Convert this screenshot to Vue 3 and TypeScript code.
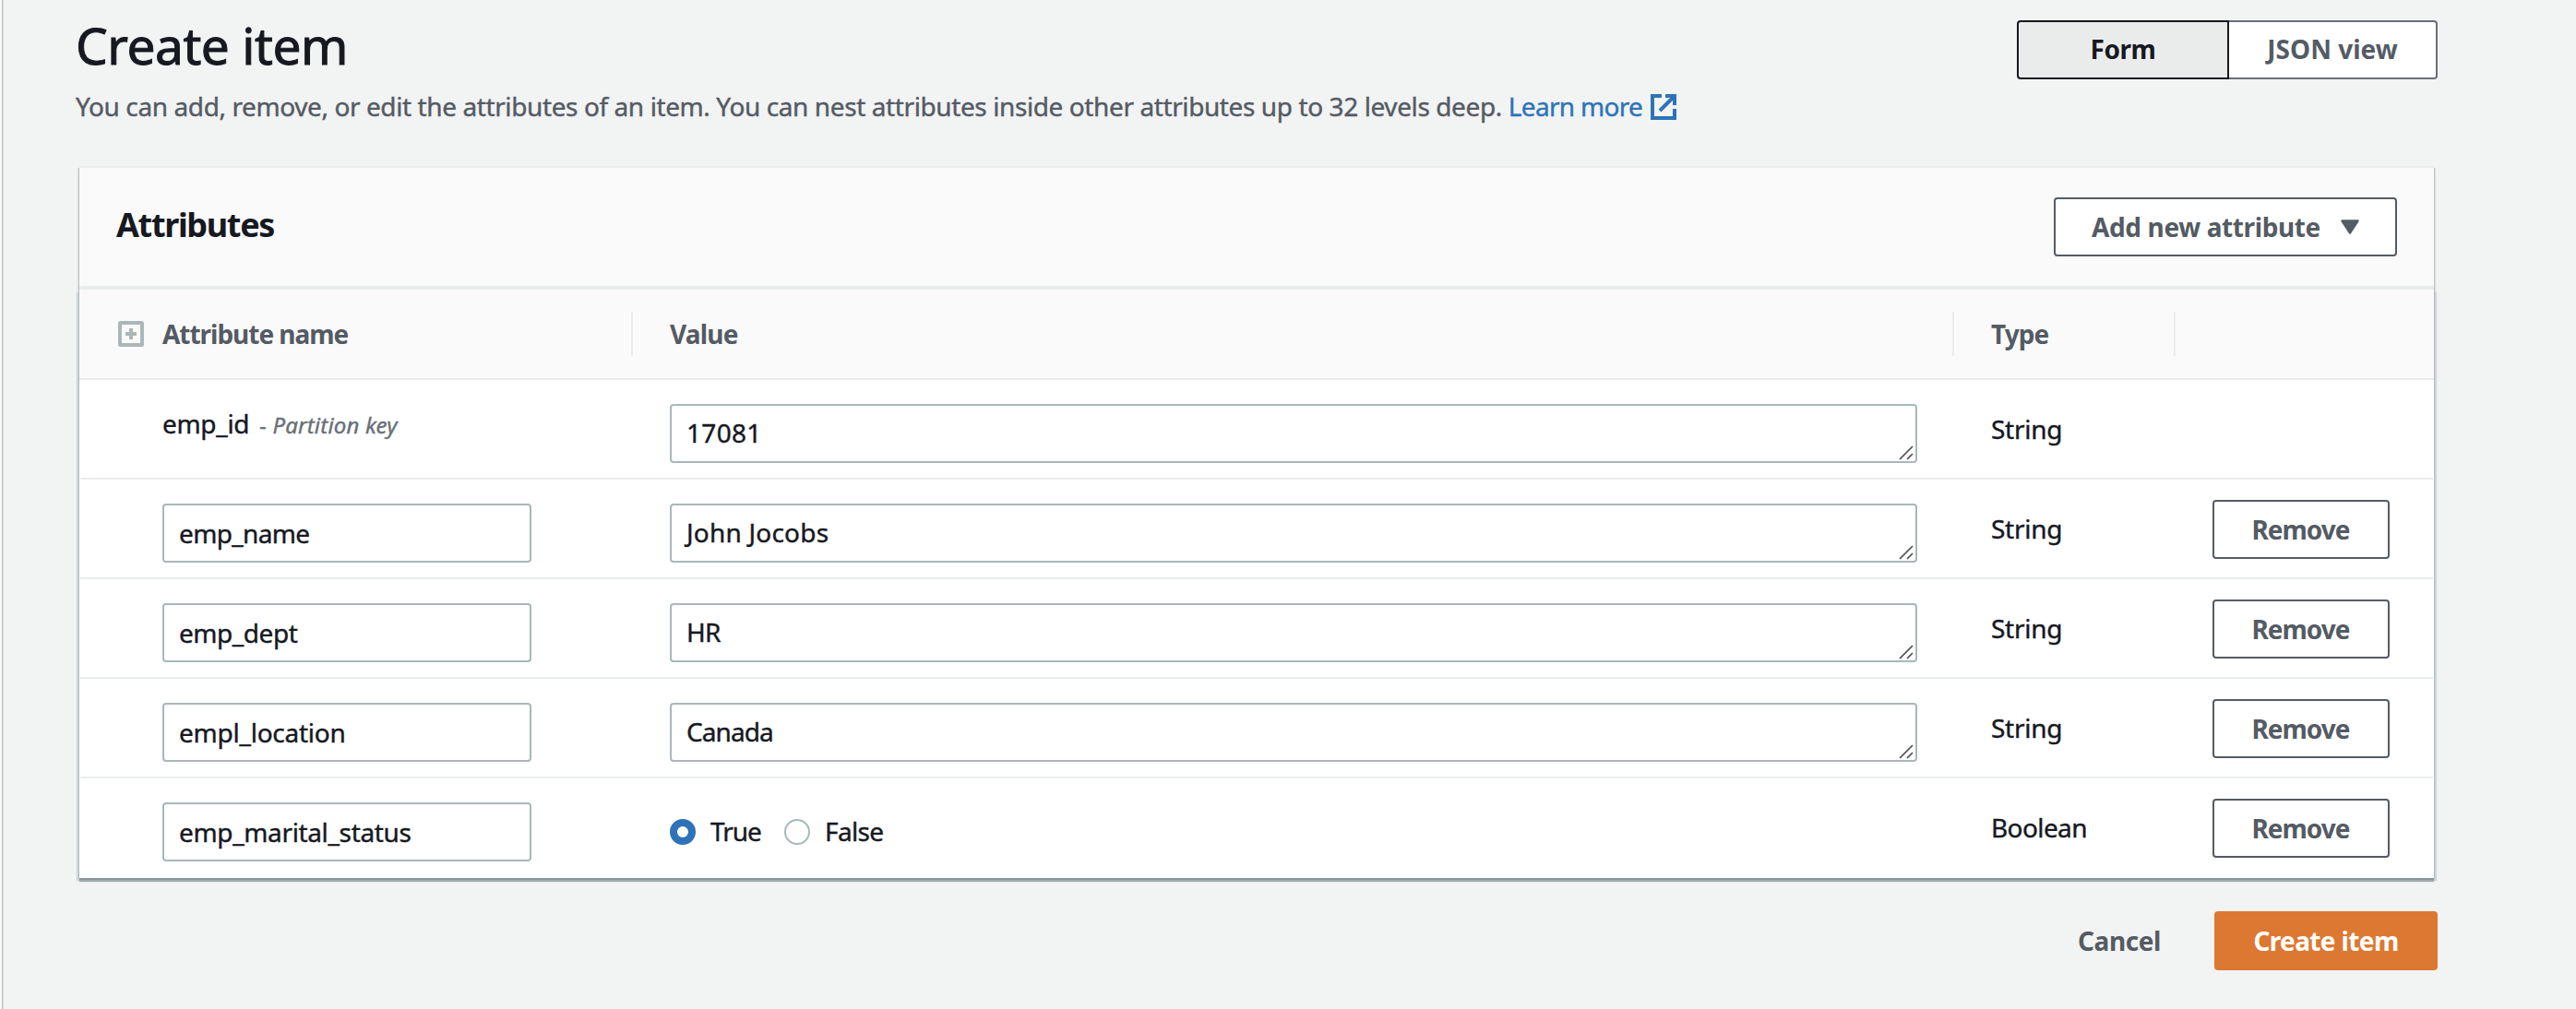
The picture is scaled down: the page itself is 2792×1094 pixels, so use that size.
<script setup lang="ts">
import { ref } from 'vue'

interface Attribute {
  name: string
  value: string
  type: 'String' | 'Boolean'
  tracking: number
  valueTracking: number
  partitionKey?: boolean
}

const attributes = ref<Attribute[]>([
  { name: 'emp_id', value: '17081', type: 'String', tracking: -0.3, valueTracking: 0.3, partitionKey: true },
  { name: 'emp_name', value: 'John Jocobs', type: 'String', tracking: -0.65, valueTracking: 0.2 },
  { name: 'emp_dept', value: 'HR', type: 'String', tracking: -0.45, valueTracking: -0.8 },
  { name: 'empl_location', value: 'Canada', type: 'String', tracking: -0.24, valueTracking: -0.93 },
  { name: 'emp_marital_status', value: 'true', type: 'Boolean', tracking: -0.35, valueTracking: 0 },
])

const view = ref<'form' | 'json'>('form')

function remove(index: number) {
  attributes.value.splice(index, 1)
}
</script>

<template>
  <main class="page">
    <header class="page-head">
      <div>
        <h1>Create item</h1>
        <p class="desc">
          <span>You can add, remove, or edit the attributes of an item. You can nest attributes inside other attributes up to 32 levels deep.</span>
          <a class="learn">Learn more</a>
          <svg class="ext" width="28" height="28" viewBox="0 0 28 28" fill="none" stroke="currentColor" stroke-width="4">
            <path d="M12 2H2V26H26V16" />
            <path d="M16 2H26V12M25 3L10 18" />
          </svg>
        </p>
      </div>
      <div class="toggle">
        <button class="seg form" :class="{ on: view === 'form' }" @click="view = 'form'"><span>Form</span></button>
        <button class="seg json" :class="{ on: view === 'json' }" @click="view = 'json'"><span>JSON view</span></button>
      </div>
    </header>

    <section class="panel">
      <div class="panel-head">
        <h2>Attributes</h2>
        <button class="btn add">
          <span>Add new attribute</span>
          <svg width="20" height="16" viewBox="0 0 20 16">
            <path d="M1.5 1.5H18.5L10 14.5Z" fill="currentColor" stroke="currentColor" stroke-width="2.4" stroke-linejoin="round" />
          </svg>
        </button>
      </div>

      <div class="table">
        <div class="grid thead">
          <div class="th first">
            <svg width="28" height="28" viewBox="0 0 28 28" fill="none" stroke="#aab7b8" stroke-width="4">
              <rect x="2" y="2" width="24" height="24" rx="0.5" />
              <path d="M8 14H20M14 8V20" />
            </svg>
            <span class="name-label">Attribute name</span>
          </div>
          <div class="th"><span class="value-label">Value</span></div>
          <div class="th"><span class="type-label">Type</span></div>
          <div class="th last"></div>
        </div>

        <div v-for="(attr, i) in attributes" :key="attr.name" class="grid row">
          <div class="name-cell">
            <div v-if="attr.partitionKey" class="key">
              <span :style="{ letterSpacing: attr.tracking + 'px' }">{{ attr.name }}</span>
              <em>- Partition key</em>
            </div>
            <div v-else class="field name-field">
              <span :style="{ letterSpacing: attr.tracking + 'px' }">{{ attr.name }}</span>
            </div>
          </div>
          <div class="value-cell">
            <div v-if="attr.type === 'String'" class="field area">
              <span :style="{ letterSpacing: attr.valueTracking + 'px' }">{{ attr.value }}</span>
              <svg class="grip" width="16" height="16" viewBox="0 0 16 16" stroke="#4d4d4d" stroke-width="1.7">
                <path d="M1 15L15 1M9 15L15 9" />
              </svg>
            </div>
            <div v-else class="radios">
              <i class="radio checked"></i><span class="true">True</span>
              <i class="radio"></i><span class="false">False</span>
            </div>
          </div>
          <div class="type-cell" :class="attr.type.toLowerCase()">{{ attr.type }}</div>
          <div class="action-cell">
            <button v-if="!attr.partitionKey" class="btn remove" @click="remove(i)"><span>Remove</span></button>
          </div>
        </div>
      </div>
    </section>

    <footer class="actions">
      <button class="cancel"><span>Cancel</span></button>
      <button class="create"><span>Create item</span></button>
    </footer>
  </main>
</template>

<style>
body {
  background: #f2f3f3;
}
</style>

<style scoped>
.page {
  box-sizing: border-box;
  width: 2792px;
  height: 1094px;
  overflow: hidden;
  padding: 11px 150px 0 83px;
  background: linear-gradient(90deg, #f8f9f9 0 2px, #bac1c4 2px 3px, #dbe0e1 3px 4px, #f2f3f3 4px);
  color: #16191f;
  font: 400 28px/38px 'Noto Sans', 'Open Sans', sans-serif;
  -webkit-text-stroke: 0.4px currentColor;
}

.page-head {
  display: flex;
  justify-content: space-between;
  align-items: flex-start;
  height: 169px;
}

h1 {
  margin: 0 0 10px -1px;
  font-weight: 400;
  font-size: 55px;
  line-height: 75px;
  letter-spacing: -0.45px;
  -webkit-text-stroke-width: 1px;
}

.desc {
  display: flex;
  margin: 0 0 0 -1px;
  color: #545b64;
  letter-spacing: -0.4px;
  white-space: nowrap;
}

.learn {
  margin-left: 7px;
  color: #2e73b8;
  letter-spacing: -0.7px;
}

.ext {
  margin: 6px 0 0 9px;
  color: #2e73b8;
}

button {
  box-sizing: border-box;
  display: flex;
  align-items: center;
  justify-content: center;
  height: 64px;
  margin: 0;
  padding: 0;
  border: 2px solid #545b64;
  border-radius: 4px;
  background: #fff;
  color: #545b64;
  font: 700 28px/38px 'Noto Sans', 'Open Sans', sans-serif;
  -webkit-text-stroke-width: 0;
  white-space: nowrap;
}

button span {
  margin-top: -1px;
}

.toggle {
  display: flex;
  margin-top: 11px;
}

.seg span {
  margin-top: -2px;
}

.seg {
  border-color: #687078;
}

.seg.form {
  width: 230px;
  border-radius: 4px 0 0 4px;
  letter-spacing: -0.46px;
}

.seg.json {
  width: 226px;
  border-left: 0;
  border-radius: 0 4px 4px 0;
  letter-spacing: 0;
}

.seg.on {
  border-color: #16191f;
  background: #eaeceb;
  color: #16191f;
}

.panel {
  width: 2552px;
  margin-left: 3px;
}

.panel-head {
  box-sizing: border-box;
  display: flex;
  justify-content: space-between;
  align-items: flex-start;
  height: 134px;
  padding: 32px 40px 0;
  border-top: 2px solid #eaeded;
  border-bottom: 4px solid #eaeded;
  background: #fafafa;
  box-shadow: 1px 2px 0 #bac2c4, -1px 2px 0 #bac2c4, 2px 3px 1px #dde1e2, -2px 3px 1px #dde1e2;
}

h2 {
  margin: 5px 0 0;
  font-weight: 700;
  font-size: 36px;
  line-height: 50px;
  letter-spacing: -1.33px;
  -webkit-text-stroke-width: 0;
}

.add {
  width: 372px;
  letter-spacing: -0.38px;
}

.add svg {
  margin-left: 22px;
}

.table {
  background: #fff;
  box-shadow: 0 2px 0 #89969a, 0 4px 1px #9faaad, 1px 1px 0 #b8bfc2, -1px 1px 0 #b8bfc2, 3px 3px 1px #d0d6d8, -3px 3px 1px #d0d6d8;
}

.grid {
  display: grid;
  grid-template-columns: 600px 1432px 240px 280px;
}

.thead {
  box-sizing: border-box;
  height: 98px;
  padding: 24px 0;
  border-bottom: 2px solid #eaeded;
  background: #fafafa;
  color: #545b64;
  font-weight: 700;
  -webkit-text-stroke-width: 0;
}

.th {
  box-sizing: border-box;
  display: flex;
  align-items: center;
  height: 48px;
  padding-left: 40px;
  border-right: 2px solid #eaeded;
}

.th.last {
  border-right: 0;
}

.th.first {
  padding-left: 42px;
}

.th span {
  margin-top: -1px;
}

.name-label {
  margin-left: 20px;
  letter-spacing: -1.03px;
}

.value-label {
  letter-spacing: -0.8px;
}

.type-label {
  letter-spacing: -0.93px;
}

.row {
  height: 108px;
  background: linear-gradient(#eaeded, #eaeded) center bottom / calc(100% - 2px) 2px no-repeat;
}

.row:last-child {
  background: none;
}

.name-cell {
  padding: 26px 0 0 90px;
}

.key {
  display: flex;
  align-items: baseline;
  margin-top: 2px;
}

.key em {
  margin-left: 11px;
  color: #687078;
  font-size: 24px;
  line-height: 32px;
  letter-spacing: 0.18px;
}

.field {
  position: relative;
  box-sizing: border-box;
  height: 64px;
  padding: 11px 16px 0;
  border: 2px solid #aab7b8;
  border-radius: 4px;
  background: #fff;
}

.name-field {
  width: 400px;
}

.value-cell {
  padding: 26px 40px 0;
}

.area {
  padding-top: 10px;
}

.grip {
  position: absolute;
  right: 2px;
  bottom: 1px;
}

.radios {
  display: flex;
  padding-top: 12px;
}

.radio {
  box-sizing: border-box;
  width: 28px;
  height: 28px;
  margin: 6px 16px 0 0;
  border: 2px solid #aab7b8;
  border-radius: 50%;
  background: #fff;
}

.radio.checked {
  border: 8px solid #2e73b8;
}

.true {
  width: 80px;
  letter-spacing: -1px;
}

.false {
  letter-spacing: -0.64px;
}

.type-cell {
  padding: 34px 0 0 40px;
  letter-spacing: -0.25px;
}

.type-cell.boolean {
  letter-spacing: -0.6px;
}

.action-cell {
  padding: 22px 0 0 40px;
}

.remove {
  width: 192px;
  padding-right: 1px;
  letter-spacing: -0.98px;
}

.actions {
  display: flex;
  justify-content: flex-end;
  margin-top: 36px;
}

.cancel {
  margin-right: 58px;
  border: 0;
  background: none;
  letter-spacing: -0.4px;
}

.create {
  width: 242px;
  border-color: #dd7832;
  background: #dd7832;
  color: #fff;
  letter-spacing: -0.63px;
}
</style>
